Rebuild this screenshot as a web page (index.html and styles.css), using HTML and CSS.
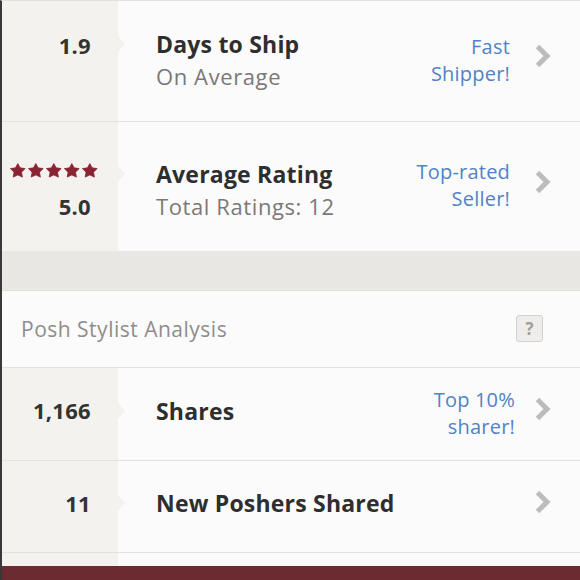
FILE: index.html
```html
<!DOCTYPE html>
<html lang="en">
<head>
    <meta charset="UTF-8">
    <meta name="viewport" content="width=device-width, initial-scale=1.0">
    <title>Closet Stats</title>
    <link rel="stylesheet" href="styles.css">
</head>
<body>
    <div class="stats">
        <div class="stat-row row-ship">
            <div class="stat-num">
                <span class="num">1.9</span>
            </div>
            <div class="stat-body">
                <div class="stat-title">Days to Ship</div>
                <div class="stat-sub">On Average</div>
            </div>
            <div class="stat-badge">Fast<br>Shipper!</div>
            <svg class="chevron" width="18" height="24" viewBox="0 0 18 24"><path d="M3.5 2.5 L13 12 L3.5 21.5" fill="none" stroke="#bdbcbb" stroke-width="5"/></svg>
        </div>

        <div class="stat-row row-rating">
            <div class="stat-num">
                <div class="stars">
                    <svg width="88" height="16" viewBox="0 0 88 16">
                        <path id="star" d="M7.8 0.6 L10.09 4.84 L15.2 5.59 L11.51 9.21 L12.39 14.1 L7.8 11.9 L3.21 14.1 L4.09 9.21 L0.4 5.59 L5.51 4.84 Z" fill="#8a2434" stroke="#8a2434" stroke-width="0.8" stroke-linejoin="round"/>
                        <use href="#star" x="18"/>
                        <use href="#star" x="36"/>
                        <use href="#star" x="54"/>
                        <use href="#star" x="72"/>
                    </svg>
                </div>
                <span class="num">5.0</span>
            </div>
            <div class="stat-body">
                <div class="stat-title">Average Rating</div>
                <div class="stat-sub">Total Ratings: 12</div>
            </div>
            <div class="stat-badge">Top-rated<br>Seller!</div>
            <svg class="chevron" width="18" height="24" viewBox="0 0 18 24"><path d="M3.5 2.5 L13 12 L3.5 21.5" fill="none" stroke="#bdbcbb" stroke-width="5"/></svg>
        </div>

        <div class="band"></div>

        <div class="section-head">
            <span>Posh Stylist Analysis</span>
            <span class="help">?</span>
        </div>

        <div class="stat-row row-shares single">
            <div class="stat-num">
                <span class="num">1,166</span>
            </div>
            <div class="stat-body">
                <div class="stat-title">Shares</div>
            </div>
            <div class="stat-badge wide">Top 10%<br>sharer!</div>
            <svg class="chevron" width="18" height="24" viewBox="0 0 18 24"><path d="M3.5 2.5 L13 12 L3.5 21.5" fill="none" stroke="#bdbcbb" stroke-width="5"/></svg>
        </div>

        <div class="stat-row row-new single">
            <div class="stat-num">
                <span class="num">11</span>
            </div>
            <div class="stat-body">
                <div class="stat-title">New Poshers Shared</div>
            </div>
            <svg class="chevron" width="18" height="24" viewBox="0 0 18 24"><path d="M3.5 2.5 L13 12 L3.5 21.5" fill="none" stroke="#bdbcbb" stroke-width="5"/></svg>
        </div>

        <div class="stat-row row-cut">
            <div class="stat-num"></div>
            <div class="stat-body"></div>
        </div>

        <div class="footer-bar"></div>
    </div>
</body>
</html>
```

FILE: styles.css
```css
html, body {
    margin: 0;
    padding: 0;
    height: 580px;
    overflow: hidden;
    background-color: #fcfbfb;
}
body {
    font-family: "Open Sans", Lato, sans-serif;
    color: #2e2e2e;
}
.stats {
    border-top: 1px solid #e4e2e0;
    border-left: 2px solid #3a3838;
    height: 579px;
    overflow: hidden;
}
.stat-row {
    display: flex;
    align-items: center;
    border-bottom: 1px solid #e4e2e0;
    background-color: #fcfbfb;
}
.row-ship { height: 120px; }
.row-rating { height: 129px; border-bottom: none; }
.row-shares { height: 92px; }
.row-new { height: 91px; }
.row-cut { height: 13px; border-bottom: none; }
.stat-num {
    width: 116px;
    align-self: stretch;
    background-color: #f4f2ef;
    display: flex;
    flex-direction: column;
    justify-content: center;
    align-items: flex-end;
    padding-right: 27px;
    box-sizing: border-box;
    flex-shrink: 0;
}
.num {
    font-size: 22px;
    font-weight: bold;
    color: #333;
    line-height: 28px;
    letter-spacing: 0.3px;
}
.row-ship .num { margin-top: -32px; }
.row-rating .num { margin-top: 13px; }
.single .num { margin-top: -8px; }
.stars {
    margin-right: -7px;
    margin-top: 10px;
    line-height: 0;
}
.stat-body {
    flex: 1;
    padding-left: 38px;
}
.row-ship .stat-body { margin-top: -2px; }
.row-rating .stat-body { margin-top: 6px; }
.single .stat-body { margin-top: -7px; }
.stat-title {
    position: relative;
    font-size: 23px;
    font-weight: bold;
    line-height: 32px;
    letter-spacing: 0.2px;
}
.stat-title::before {
    content: "";
    position: absolute;
    left: -38px;
    top: 50%;
    margin-top: -8px;
    border-top: 8px solid transparent;
    border-bottom: 8px solid transparent;
    border-left: 7px solid #f4f2ef;
}
.stat-sub {
    font-size: 22px;
    color: #7a7878;
    line-height: 32px;
    letter-spacing: 0.6px;
}
.stat-badge {
    text-align: right;
    font-size: 20px;
    line-height: 27px;
    color: #4f83c9;
    margin-right: 24px;
    margin-top: -3px;
    letter-spacing: 0.2px;
}
.stat-badge.wide { margin-right: 19px; }
.chevron {
    margin-right: 28px;
    margin-bottom: 10px;
    flex-shrink: 0;
}
.row-new .chevron { margin-left: auto; }
.band {
    height: 39px;
    background-color: #e9e7e4;
    border-bottom: 1px solid #e2e0dd;
}
.section-head {
    height: 76px;
    display: flex;
    align-items: center;
    justify-content: space-between;
    padding: 0 37px 0 19px;
    font-size: 21px;
    letter-spacing: 0.5px;
    color: #8f8d8b;
    border-bottom: 1px solid #e4e2e0;
}
.help {
    width: 27px;
    height: 27px;
    box-sizing: border-box;
    border: 1px solid #d3d1ce;
    border-radius: 3px;
    background-color: #efedeb;
    font-size: 17px;
    font-weight: bold;
    color: #a09e9c;
    text-align: center;
    line-height: 25px;
    letter-spacing: 0;
    margin-top: -2px;
}
.footer-bar {
    height: 20px;
    background-color: #6c2a31;
}
```
